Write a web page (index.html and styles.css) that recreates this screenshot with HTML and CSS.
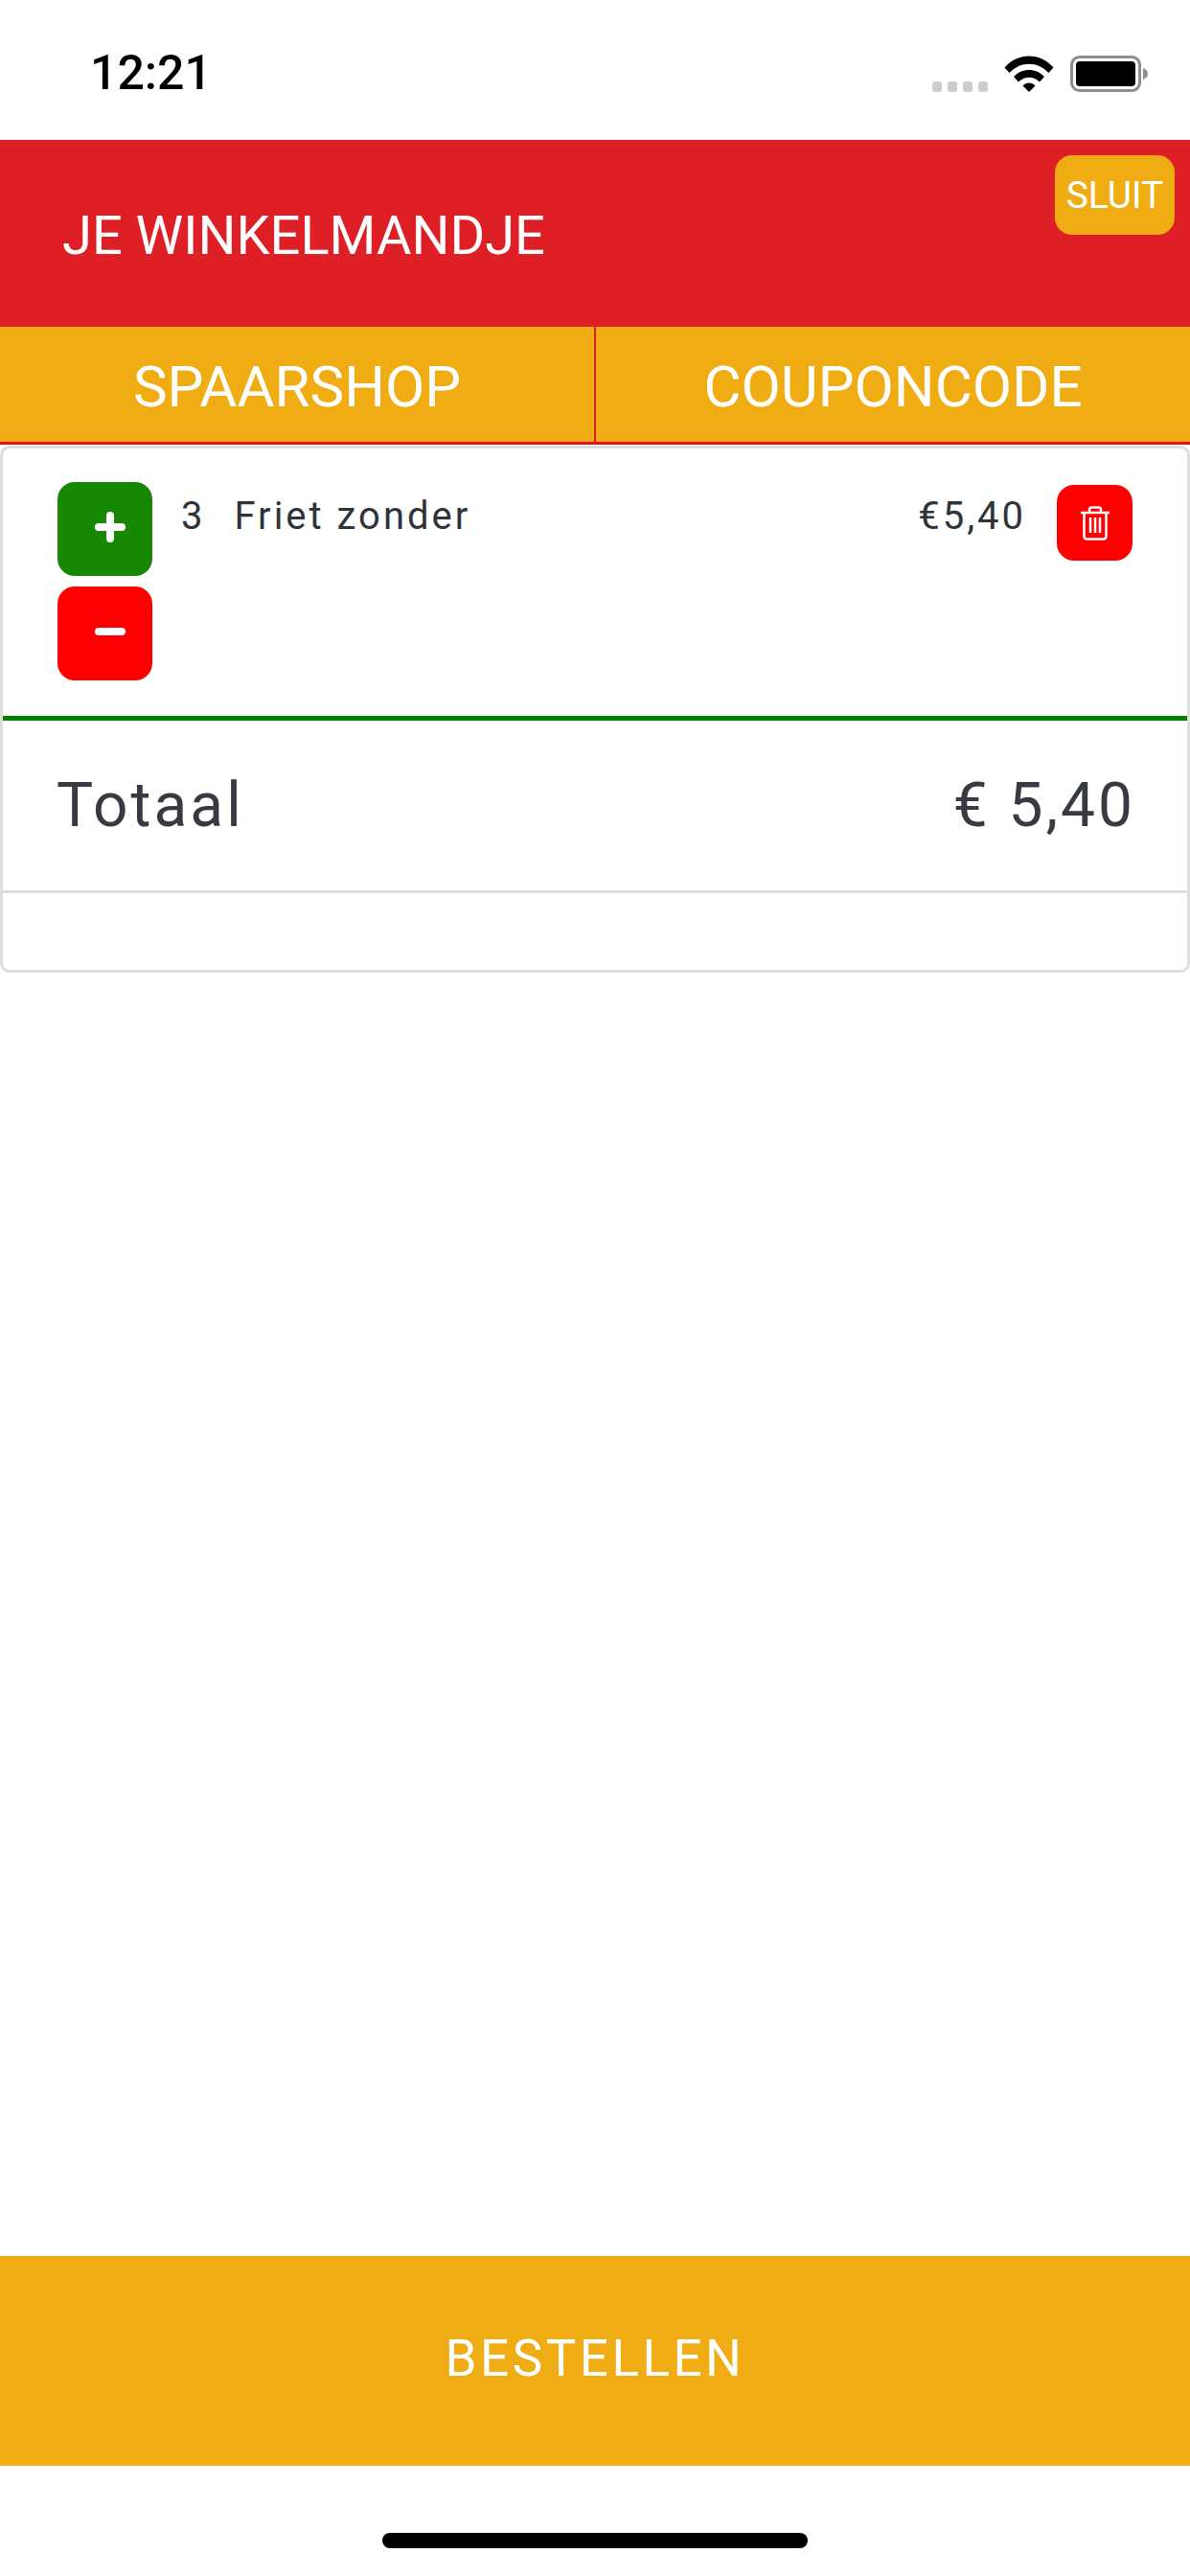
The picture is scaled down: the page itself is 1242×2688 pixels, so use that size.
FILE: index.html
```html
<!DOCTYPE html>
<html lang="en">
<head>
  <meta charset="UTF-8" />
  <title>Je winkelmandje</title>
  <link rel="stylesheet" href="styles.css">
</head>
<body>

<div class="screen">
  <div class="status-bar">
    <span class="time">12:21</span>
    <div class="status-icons">
      <div class="signal"><i></i><i></i><i></i><i></i></div>
      <svg class="wifi" width="52" height="38" viewBox="0 0 52 38">
        <path d="M0.500 12.500 C14 -3.500 38 -3.500 51.500 12.500 L46.500 18 C35 5.500 17 5.500 5.500 18 Z" fill="#000"/>
        <path d="M10 22 C18.500 12.500 33.500 12.500 42 22 L37 27.500 C31 21 21 21 15 27.500 Z" fill="#000"/>
        <path d="M19.500 31.500 C23 27.500 29 27.500 32.500 31.500 L26 38 Z" fill="#000"/>
      </svg>
      <svg class="battery" width="82" height="38" viewBox="0 0 82 38">
        <rect x="1.500" y="1.500" width="71" height="35" rx="8" fill="none" stroke="#8e8e8e" stroke-width="3"/>
        <rect x="6" y="6" width="62" height="26" rx="4" fill="#000"/>
        <path d="M76 13 C79 14 81 16 81 19 C81 22 79 24 76 25 Z" fill="#8e8e8e"/>
      </svg>
    </div>
  </div>

  <div class="header">
    <h1>JE WINKELMANDJE</h1>
    <button class="close-btn">SLUIT</button>
  </div>

  <div class="tabs">
    <div class="tab">SPAARSHOP</div>
    <div class="tab">COUPONCODE</div>
  </div>

  <div class="card">
    <div class="cart-item">
      <div class="qty-buttons">
        <div class="qty-btn plus">
          <svg width="32" height="32" viewBox="0 0 32 32"><path d="M16 4 V28 M4 16 H28" stroke="#fff" stroke-width="8" stroke-linecap="round" fill="none"/></svg>
        </div>
        <div class="qty-btn minus">
          <svg width="32" height="32" viewBox="0 0 32 32"><path d="M4 16 H28" stroke="#fff" stroke-width="8" stroke-linecap="round" fill="none"/></svg>
        </div>
      </div>
      <span class="item-qty">3</span>
      <span class="item-name">Friet zonder</span>
      <span class="item-price">€5,40</span>
      <div class="delete-btn">
        <svg width="32" height="36" viewBox="0 0 32 36" fill="none" stroke="#fff" stroke-width="2.500">
          <path d="M1 7 H31"/>
          <path d="M10 7 V4 Q10 1.500 12.500 1.500 H19.500 Q22 1.500 22 4 V7"/>
          <path d="M4.500 7 V31.500 Q4.500 34.500 7.500 34.500 H24.500 Q27.500 34.500 27.500 31.500 V7"/>
          <path d="M11 12 V28 M16 12 V28 M21 12 V28"/>
        </svg>
      </div>
    </div>
    <div class="total-row">
      <span>Totaal</span>
      <span>€ 5,40</span>
    </div>
    <div class="card-footer"></div>
  </div>

  <div class="spacer"></div>

  <div class="order-btn">BESTELLEN</div>
  <div class="home-area"><div class="home-bar"></div></div>
</div>

</body>
</html>
```
FILE: styles.css
```css
* {
  box-sizing: border-box;
}
body {
  margin: 0;
  font-family: Roboto, "Liberation Sans", sans-serif;
  background: #fff;
}
.screen {
  width: 1242px;
  height: 2688px;
  display: flex;
  flex-direction: column;
  overflow: hidden;
}
.status-bar {
  height: 146px;
  flex: none;
  padding: 46px 43px 0 94px;
  display: flex;
  justify-content: space-between;
  align-items: flex-start;
}
.time {
  font-size: 50px;
  font-weight: 500;
  line-height: 60px;
  color: #000;
}
.status-icons {
  display: flex;
  align-items: flex-end;
  margin-top: 12px;
}
.signal {
  display: flex;
  gap: 6px;
  margin-right: 17px;
}
.signal i {
  width: 10px;
  height: 11px;
  border-radius: 3px;
  background: #ccc;
}
.wifi {
  margin-right: 17px;
}
.header {
  position: relative;
  height: 195px;
  flex: none;
  background: #de1f26;
  display: flex;
  align-items: center;
  padding: 4px 0 0 65px;
}
.header h1 {
  margin: 0;
  font-size: 56px;
  font-weight: 400;
  color: #fff;
}
.close-btn {
  position: absolute;
  top: 16px;
  right: 16px;
  width: 125px;
  height: 83px;
  padding: 0;
  border: 0;
  border-radius: 18px;
  background: #f0ad13;
  color: #fff;
  font-family: inherit;
  font-size: 39px;
}
.tabs {
  height: 123px;
  flex: none;
  display: flex;
  background: #f0ad13;
  border-bottom: 3px solid #e3131d;
}
.tab {
  flex: 1;
  display: flex;
  align-items: center;
  justify-content: center;
  padding-top: 4px;
  color: #fff;
  font-size: 60px;
}
.tab + .tab {
  border-left: 2px solid #de1f26;
}
.card {
  flex: none;
  margin-top: 1px;
  height: 550px;
  border: 3px solid #dedede;
  border-radius: 10px;
  display: flex;
  flex-direction: column;
}
.cart-item {
  height: 284px;
  flex: none;
  display: flex;
  align-items: flex-start;
  padding: 35px 57px 0;
  border-bottom: 5px solid #008000;
  color: #2f343b;
  font-size: 40px;
  letter-spacing: 3px;
  line-height: 46px;
}
.qty-buttons {
  display: flex;
  flex-direction: column;
  gap: 11px;
  margin-right: 30px;
}
.qty-btn {
  width: 99px;
  height: 98px;
  border-radius: 18px;
  display: flex;
  align-items: center;
  justify-content: center;
  padding: 0 0 4px 10px;
}
.plus {
  background: #188804;
}
.minus {
  background: #ff0000;
}
.item-qty {
  margin-right: 30px;
  margin-top: 13px;
}
.item-name {
  flex: 1;
  margin-top: 13px;
}
.item-price {
  margin-top: 13px;
  margin-right: 32px;
}
.delete-btn {
  width: 79px;
  height: 79px;
  border-radius: 18px;
  background: #ff0000;
  display: flex;
  align-items: center;
  justify-content: center;
  margin-top: 3px;
}
.total-row {
  height: 180px;
  flex: none;
  display: flex;
  justify-content: space-between;
  align-items: center;
  padding: 0 54px 0 56px;
  border-bottom: 3px solid #dedede;
  color: #373a40;
  font-size: 64px;
  letter-spacing: 3px;
}
.card-footer {
  flex: 1;
}
.spacer {
  flex: 1;
}
.order-btn {
  height: 219px;
  flex: none;
  background: #f0ad13;
  color: #fff;
  display: flex;
  align-items: center;
  justify-content: center;
  padding-bottom: 6px;
  font-size: 53px;
  letter-spacing: 3.500px;
}
.home-area {
  height: 115px;
  flex: none;
  display: flex;
  justify-content: center;
  padding-top: 70px;
}
.home-bar {
  width: 444px;
  height: 16px;
  border-radius: 8px;
  background: #000;
}
```
